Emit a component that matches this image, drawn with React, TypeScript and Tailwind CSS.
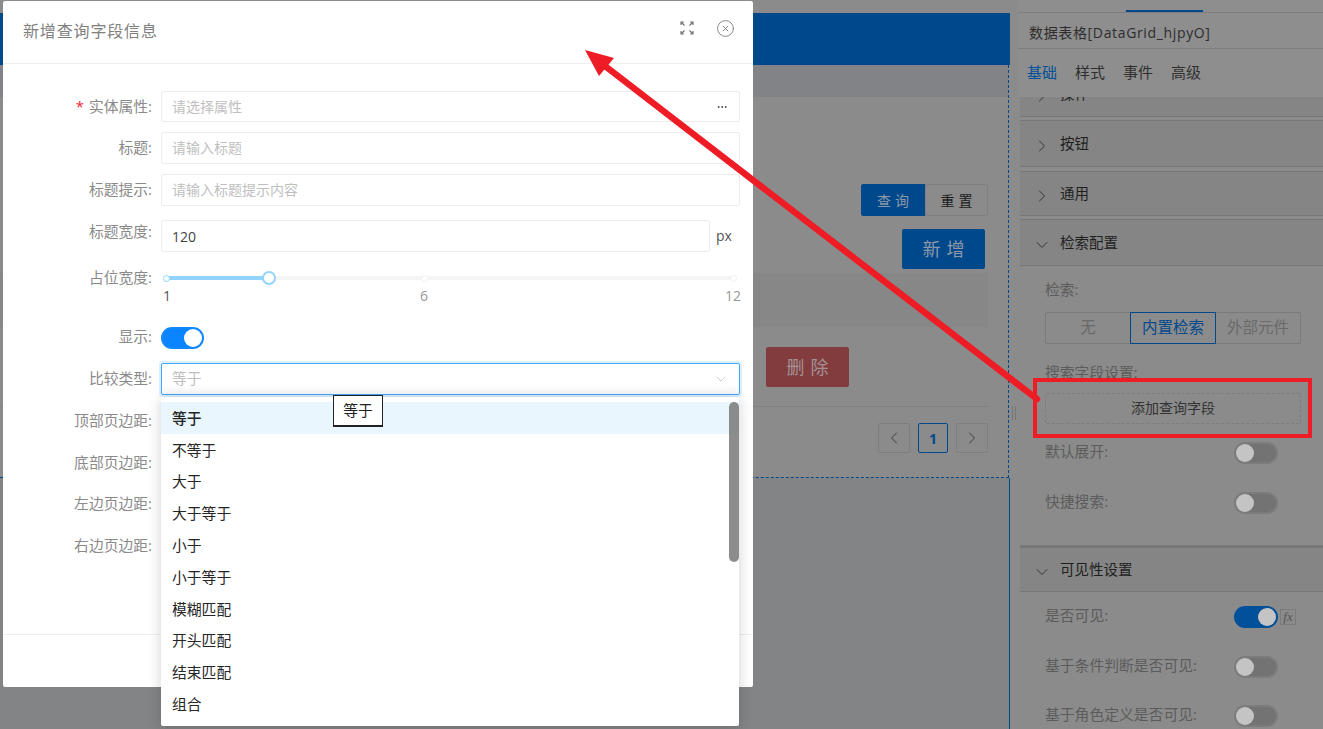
import type { ReactNode } from "react";
import { ChevronDown, ChevronLeft, ChevronRight, CircleX, Ellipsis } from "lucide-react";

const options = ["等于", "不等于", "大于", "大于等于", "小于", "小于等于", "模糊匹配", "开头匹配", "结束匹配", "组合"];

const Switch = ({ on = false }: { on?: boolean }) => (
  <div
    className={`flex h-[22px] w-[44px] shrink-0 items-center rounded-full border-2 ${
      on ? "justify-end border-[#00509a] bg-[#00509a]" : "justify-start border-[#7c7c7c] bg-[#737373]"
    }`}
  >
    <div className="h-[18px] w-[18px] rounded-full bg-[#c4c4c4]" />
  </div>
);

const PanelHeader = ({ title, open = false, className = "" }: { title: string; open?: boolean; className?: string }) => (
  <div className={`flex items-center border-y border-[#777] bg-[#858585] pl-[12px] ${className}`}>
    {open ? (
      <ChevronDown className="mt-1 h-5 w-5 text-[#2b2b2b]" strokeWidth={1.1} />
    ) : (
      <ChevronRight className="mt-1 h-5 w-5 text-[#2b2b2b]" strokeWidth={1.1} />
    )}
    <span className="ml-[8px] text-[14.5px] text-[#1f1f1f]">{title}</span>
  </div>
);

const PanelRow = ({ label, className = "", children }: { label: string; className?: string; children?: ReactNode }) => (
  <div className={`flex h-[22px] items-center pl-[25px] text-[14.8px] text-[#5c5c5c] ${className}`}>
    <span className="mb-[3px] w-[189px]">{label}</span>
    {children}
  </div>
);

const FormRow = ({
  label,
  required,
  className = "",
  labelClass = "mb-[2px]",
  children,
}: {
  label: string;
  required?: boolean;
  className?: string;
  labelClass?: string;
  children?: ReactNode;
}) => (
  <div className={`flex items-center pr-[13px] ${className}`}>
    <label className={`w-[149px] shrink-0 text-right text-[14.8px] text-[#8a8a8a] ${labelClass}`}>
      {required && <span className="mr-[5px] text-[#f5222d]">*</span>}
      {label}:
    </label>
    <div className="ml-[9px] flex h-full min-w-0 flex-1 items-center">{children}</div>
  </div>
);

const Input = ({ placeholder, value }: { placeholder?: string; value?: string }) => (
  <div className="flex h-full flex-1 items-center rounded-[2px] border border-[#ececec] px-[10px] text-[14px]">
    {value ? <span className="text-[#444]">{value}</span> : <span className="mb-[2px] text-[#bfbfbf]">{placeholder}</span>}
  </div>
);

const PageBtn = ({ children, active = false }: { children: ReactNode; active?: boolean }) => (
  <div
    className={`flex h-[30px] items-center justify-center rounded-[2px] border ${
      active ? "w-[30px] border-[#00488c] text-[#00488c]" : "w-[32px] border-[#7e7e7e] text-[#333]"
    }`}
  >
    {children}
  </div>
);

const Background = () => (
  <div className="flex h-[729px] w-[1323px] overflow-hidden bg-[#8b8b8b]">
    <div className="flex w-[1010px] shrink-0 flex-col">
      <div className="h-[13px]" />
      <div className="h-[52px] bg-[#00488c]" />
      <div className="mr-[1px] flex h-[413px] flex-col border-r border-b border-dashed border-[#00488c]">
        <div className="h-[32px] bg-[#828386]" />
        <div className="mt-[87px] flex justify-end pr-[20px]">
          <div className="flex h-[32px] w-[64px] items-center justify-center rounded-l-[2px] bg-[#00488c] pl-[4px] text-[14px] tracking-[4px] text-[#8d99a6]">
            查询
          </div>
          <div className="flex h-[32px] w-[63px] items-center justify-center rounded-r-[2px] border border-[#808080] pl-[4px] text-[14px] tracking-[4px] text-[#1c1c1c]">
            重置
          </div>
        </div>
        <div className="mt-[13px] flex justify-end pr-[23px]">
          <div className="flex h-[40px] w-[83px] items-center justify-center rounded-[2px] bg-[#00488c] pl-[6px] text-[18px] tracking-[6px] text-[#8d99a6]">
            新增
          </div>
        </div>
        <div className="mt-[4px] mr-[20px] h-[54px] bg-[#878787]" />
        <div className="mt-[20px] flex justify-end pr-[159px]">
          <div className="flex h-[40px] w-[83px] items-center justify-center rounded-[2px] bg-[#823c3e] pl-[6px] text-[18px] tracking-[6px] text-[#a39394]">
            删除
          </div>
        </div>
        <div className="mt-[19px] mr-[20px] h-px bg-[#818181]" />
        <div className="mt-[16px] flex justify-end gap-[8px] pr-[20px]">
          <PageBtn>
            <ChevronLeft className="h-5 w-5" strokeWidth={1.1} />
          </PageBtn>
          <PageBtn active>
            <span className="text-[14px] font-bold">1</span>
          </PageBtn>
          <PageBtn>
            <ChevronRight className="h-5 w-5" strokeWidth={1.1} />
          </PageBtn>
        </div>
      </div>
      <div className="flex-1 border-r border-[#00488c] bg-[#838486]" />
    </div>

    <div className="flex w-[8px] shrink-0 items-center justify-center">
      <div className="mt-[97px] h-[14px] w-[4px] border-x border-[#777]" />
    </div>

    <div className="flex min-w-0 flex-1 flex-col">
      <div className="relative z-10 bg-[#8e8e8e]">
        <div className="flex h-[13px] items-end border-b border-[#7d7d7d]">
          <div className="ml-[108px] h-[2px] w-[77px] bg-[#00488c]" />
        </div>
        <div className="flex h-[36px] items-center border-b border-[#7d7d7d] pt-[4px] pl-[11px] text-[14px] tracking-[0.65px] text-[#2d2d2d]">
          数据表格[DataGrid_hjpyO]
        </div>
        <div className="flex h-[48px] items-center gap-[18px] pb-[2px] pl-[9px] text-[15px] text-[#2f2f2f]">
          <span className="text-[#00509a]">基础</span>
          <span>样式</span>
          <span>事件</span>
          <span>高级</span>
        </div>
      </div>
      <div className="ml-[2px]">
        <PanelHeader title="操作" className="-mt-[27px] h-[47px]" />
        <PanelHeader title="按钮" className="mt-[3px] h-[47px]" />
        <PanelHeader title="通用" className="mt-[4px] h-[45px]" />
        <PanelHeader title="检索配置" open className="mt-[3px] h-[47px]" />
        <div className="mt-[13px] pl-[25px] text-[14.8px] leading-[20px] text-[#5c5c5c]">检索:</div>
        <div className="mt-[13px] ml-[25px] flex h-[32px] w-[256px] rounded-[2px] border border-[#7a7a7a] text-[15.5px] text-[#6a6a6a]">
          <div className="flex w-[84px] items-center justify-center">无</div>
          <div className="-my-px flex w-[86px] items-center justify-center border border-[#00488c] text-[#00488c]">内置检索</div>
          <div className="flex flex-1 items-center justify-center">外部元件</div>
        </div>
        <div className="mt-[18px] pl-[25px] text-[14.8px] leading-[20px] text-[#5c5c5c]">搜索字段设置:</div>
        <div className="mt-[11px] ml-[25px] flex h-[31px] w-[256px] items-center justify-center rounded-[2px] border border-dashed border-[#7d7d7d] pb-[2px] text-[14px] text-[#333]">
          添加查询字段
        </div>
        <PanelRow label="默认展开:" className="mt-[18px]">
          <Switch />
        </PanelRow>
        <PanelRow label="快捷搜索:" className="mt-[28px]">
          <Switch />
        </PanelRow>
        <PanelHeader title="可见性设置" open className="mt-[31px] h-[47px] border-t-[3px]" />
        <PanelRow label="是否可见:" className="mt-[14px]">
          <Switch on />
          <div className="ml-[2px] flex h-[16px] w-[16px] items-center justify-center border border-[#7a7a7a] font-['Liberation_Serif',serif] text-[13px] italic text-[#555]">
            fx
          </div>
        </PanelRow>
        <PanelRow label="基于条件判断是否可见:" className="mt-[28px]">
          <Switch />
        </PanelRow>
        <PanelRow label="基于角色定义是否可见:" className="mt-[27px]">
          <Switch />
        </PanelRow>
      </div>
    </div>
  </div>
);

const Modal = () => (
  <div className="absolute top-[1px] left-[3px] flex h-[686px] w-[750px] flex-col rounded-[2px] bg-white">
    <div className="flex h-[63px] shrink-0 items-center border-b border-[#efefef] pb-[2px] pl-[20px]">
      <span className="text-[16px] tracking-[0.85px] text-[#7f7f7f]">新增查询字段信息</span>
      <svg className="mt-[-6px] ml-auto" width="14" height="14" viewBox="0 0 14 14" fill="none" stroke="#777" strokeWidth="1.2">
        <path d="M1 4V1h3M1 1l3.5 3.5M13 4V1h-3M13 1 9.5 4.5M1 10v3h3M1 13l3.5-3.5M13 10v3h-3M13 13 9.5 9.5" />
      </svg>
      <CircleX className="mt-[-6px] mr-[18px] ml-[22px] h-[19px] w-[19px] text-[#777]" strokeWidth={1.1} />
    </div>

    <FormRow label="实体属性" required labelClass="" className="mt-[27px] h-[31px]">
      <div className="flex h-full flex-1 items-center justify-between rounded-[2px] border border-[#ececec] pr-[11px] pl-[10px] text-[14px] text-[#bfbfbf]">
        请选择属性
        <Ellipsis className="h-[12px] w-[12px] text-[#222]" strokeWidth={1.5} />
      </div>
    </FormRow>
    <FormRow label="标题" className="mt-[10px] h-[32px]">
      <Input placeholder="请输入标题" />
    </FormRow>
    <FormRow label="标题提示" className="mt-[10px] h-[32px]">
      <Input placeholder="请输入标题提示内容" />
    </FormRow>
    <FormRow label="标题宽度" labelClass="-mt-[10px]" className="mt-[14px] h-[32px]">
      <Input value="120" />
      <span className="mt-[-2px] ml-[6px] w-[24px] text-[14px] text-[#555]">px</span>
    </FormRow>
    <div className="mt-[16px] flex items-start pr-[12px]">
      <label className="-mt-px h-[20px] w-[149px] shrink-0 text-right text-[14.8px] leading-[20px] text-[#8a8a8a]">占位宽度:</label>
      <div className="relative ml-[9px] h-[37px] flex-1">
        <div className="absolute top-[8px] right-[7px] left-[5px] h-[4px] rounded-full bg-[#f5f5f5]" />
        <div className="absolute top-[8px] left-[5px] h-[4px] w-[103px] rounded-l-full bg-[#91d5ff]" />
        <div className="absolute top-[7px] left-[2px] h-[7px] w-[7px] rounded-full border border-[#91d5ff] bg-white" />
        <div className="absolute top-[7px] left-[260px] h-[7px] w-[7px] rounded-full border border-[#f0f0f0] bg-white" />
        <div className="absolute top-[7px] left-[569px] h-[7px] w-[7px] rounded-full border border-[#f0f0f0] bg-white" />
        <div className="absolute top-[3px] left-[101px] h-[14px] w-[14px] rounded-full border-2 border-[#91d5ff] bg-white" />
        <span className="absolute top-[19px] left-[2px] text-[14px] leading-[18px] text-[#555]">1</span>
        <span className="absolute top-[19px] left-[259px] text-[14px] leading-[18px] text-[#999]">6</span>
        <span className="absolute top-[19px] right-0 text-[14px] leading-[18px] text-[#999]">12</span>
      </div>
    </div>
    <FormRow label="显示" labelClass="mb-[4px]" className="mt-[22px] h-[22px]">
      <div className="flex h-[22px] w-[43px] items-center justify-end rounded-full border-2 border-[#1088ff] bg-[#0a84ff]">
        <div className="h-[18px] w-[18px] rounded-full bg-white" />
      </div>
    </FormRow>
    <FormRow label="比较类型" className="mt-[14px] h-[32px]">
      <div className="flex h-full flex-1 items-center justify-between rounded-[2px] border border-[#40a9ff] bg-gradient-to-b from-white from-70% to-[#f7f7f7] px-[10px] text-[14.8px] text-[#bfbfbf] shadow-[0_0_0_2px_rgba(24,144,255,0.15)]">
        <span className="mb-[2px]">等于</span>
        <ChevronDown className="h-[16px] w-[16px] text-[#b5b5b5]" strokeWidth={1} />
      </div>
    </FormRow>
    <FormRow label="顶部页边距" className="mt-[10px] h-[32px]" />
    <FormRow label="底部页边距" className="mt-[10px] h-[32px]" />
    <FormRow label="左边页边距" className="mt-[9px] h-[32px]" />
    <FormRow label="右边页边距" className="mt-[10px] h-[32px]" />
    <div className="mt-auto h-[53px] border-t border-[#efefef]" />
  </div>
);

const Dropdown = () => (
  <div className="absolute top-[397px] left-[161px] h-[329px] w-[578px] overflow-hidden rounded-[2px] bg-white pt-[5px] shadow-[0_2px_14px_rgba(0,0,0,0.18)]">
    {options.map((opt, i) => (
      <div
        key={opt}
        className={`flex h-[31.8px] items-center pl-[11px] text-[14.8px] text-[#262626] ${i === 0 ? "bg-[#e9f6fd] font-medium" : ""}`}
      >
        {opt}
      </div>
    ))}
    <div className="absolute top-[5px] right-0 h-[160px] w-[10px] rounded-full bg-[#7f7f7f]/90" />
  </div>
);

const Annotations = () => (
  <>
    <svg className="pointer-events-none absolute inset-0" width="1323" height="729" fill="none">
      <path d="M1037 399 605 66" stroke="#ee1c25" strokeWidth="6.5" strokeLinecap="round" />
      <path d="M585 50 614 58 599 76Z" fill="#ee1c25" />
    </svg>
    <div className="pointer-events-none absolute top-[378px] left-[1033px] h-[60px] w-[279px] border-4 border-[#ee1c25]" />
  </>
);

const App = () => (
  <div className="relative h-[729px] w-[1323px] overflow-hidden font-['Open_Sans','Noto_Sans_CJK_SC',sans-serif]">
    <Background />
    <Modal />
    <Dropdown />
    <div className="absolute top-[395px] left-[333px] flex h-[32px] w-[50px] items-center justify-center border border-b-2 border-[#222] bg-white text-[14.8px] text-[#222]">
      等于
    </div>
    <Annotations />
  </div>
);

export default App;
